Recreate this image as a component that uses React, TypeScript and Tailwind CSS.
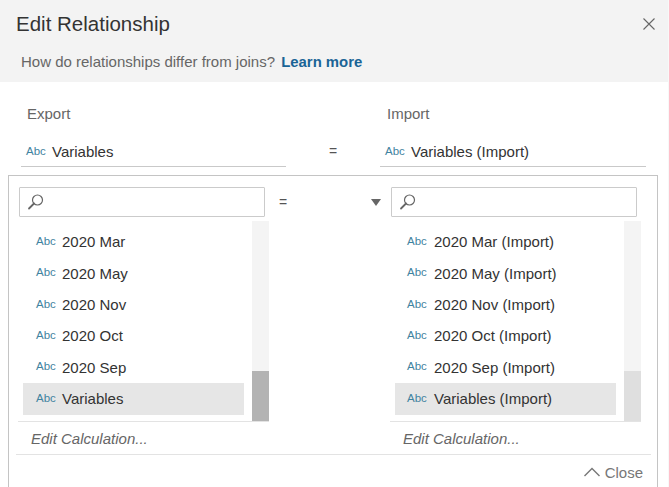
const leftItems = ["2020 Mar", "2020 May", "2020 Nov", "2020 Oct", "2020 Sep", "Variables"];
const rightItems = leftItems.map((item) => `${item} (Import)`);

function SearchIcon() {
  return (
    <svg width="18" height="18" viewBox="0 0 18 18" fill="none" className="shrink-0">
      <circle cx="10.5" cy="7" r="5" stroke="#666666" strokeWidth="1.2" />
      <path d="M7 10.5L2 15.5" stroke="#666666" strokeWidth="1.8" strokeLinecap="round" />
    </svg>
  );
}

function SearchBox() {
  return (
    <div className="w-[246px] h-[30px] border border-[#cbcbcb] rounded-[1px] flex items-center pl-[7px] bg-white">
      <SearchIcon />
    </div>
  );
}

function FieldList({ items, thumb, abcPad }: { items: string[]; thumb: string; abcPad: string }) {
  return (
    <div className="w-[250px]">
      <div className="h-[200px] mt-1 flex">
        <div className="w-[233px] pt-[6px] pl-1 pr-[8px]">
          {items.map((item, i) => (
            <div
              key={item}
              className={`h-[31.3px] flex items-center text-[15px] text-[#333333] ${abcPad} ${
                i === items.length - 1 ? "bg-[#e6e6e6]" : ""
              }`}
            >
              <span className="w-[26px] text-[11.5px] text-[#3f83a0] -translate-y-[1px]">Abc</span>
              {item}
            </div>
          ))}
        </div>
        <div className="w-[17px] bg-[#f4f4f4] flex flex-col justify-end">
          <div className={`h-[50px] ${thumb}`} />
        </div>
      </div>
      <div className="border-t border-[#e3e3e3] -ml-px h-[33px] pl-[13px] pt-[3px] flex items-center text-[15px] italic text-[#666666]">
        Edit Calculation...
      </div>
    </div>
  );
}

export default function App() {
  return (
    <div className="w-[669px] h-[487px] overflow-hidden bg-white font-['Liberation_Sans',Arial,sans-serif] border-r border-[#f8f8f8]">
      {/* Header */}
      <div className="h-[82px] bg-[#f3f3f3]">
        <div className="h-[49px] pl-4 pr-[12px] flex items-center justify-between">
          <h1 className="text-[20.5px] font-normal text-[#333333]">Edit Relationship</h1>
          <svg width="14" height="14" viewBox="0 0 14 14" fill="none" className="-translate-y-[1px]">
            <path d="M1.5 1.5L12.5 12.5M12.5 1.5L1.5 12.5" stroke="#666666" strokeWidth="1.1" />
          </svg>
        </div>
        <p className="pl-[21px] text-[15px] text-[#666666] leading-[25px]">
          How do relationships differ from joins?{" "}
          <span className="font-bold text-[#1a6496] ml-[2px] text-[14.9px]">Learn more</span>
        </p>
      </div>

      {/* Export / Import */}
      <div className="flex pt-[23px] text-[15px] text-[#666666] leading-[18px]">
        <div className="w-[387px] pl-[27px]">Export</div>
        <div>Import</div>
      </div>
      <div className="flex items-center mt-[12px] h-[32px]">
        <div className="ml-[21px] w-[265px] h-full border-b border-[#c9c9c9] flex items-center pl-[5px] pt-[4px] text-[15px] text-[#333333]">
          <span className="w-[26px] text-[11.5px] text-[#3f83a0] -translate-y-[1px]">Abc</span>
          Variables
        </div>
        <div className="w-[94px] text-center text-[14px] text-[#555555]">=</div>
        <div className="w-[266px] h-full border-b border-[#c9c9c9] flex items-center pl-[5px] pt-[4px] text-[15px] text-[#333333]">
          <span className="w-[26px] text-[11.5px] text-[#3f83a0] -translate-y-[1px]">Abc</span>
          Variables (Import)
        </div>
      </div>

      {/* Mapping panel */}
      <div className="ml-2 mt-2 w-[650px] h-[320px] border border-b-0 border-[#c4c4c4] pt-[11px] pl-[10px]">
        <div className="flex">
          <div>
            <SearchBox />
            <FieldList items={leftItems} thumb="bg-[#b3b3b3]" abcPad="pl-[13px]" />
          </div>
          <div className="w-[122px] h-[30px] flex items-center pl-[10px] pr-[10px] justify-between shrink-0">
            <span className="text-[14px] text-[#555555]">=</span>
            <span className="w-0 h-0 border-x-[5px] border-x-transparent border-t-[7px] border-t-[#666666]" />
          </div>
          <div>
            <SearchBox />
            <FieldList items={rightItems} thumb="bg-[#dfdfdf]" abcPad="pl-[12px] [&>span]:w-[27px]" />
          </div>
        </div>
        <div className="border-t border-[#e3e3e3] -ml-[3px] w-[635px] h-[35px] pr-[8px] pt-[3px] flex items-center justify-end gap-[5px] text-[15px] text-[#777777]">
          <svg width="16" height="10" viewBox="0 0 16 10" fill="none" className="-translate-y-[2px]">
            <path d="M0.5 9L8 1.5L15.5 9" stroke="#777777" strokeWidth="1.4" />
          </svg>
          Close
        </div>
      </div>
    </div>
  );
}
